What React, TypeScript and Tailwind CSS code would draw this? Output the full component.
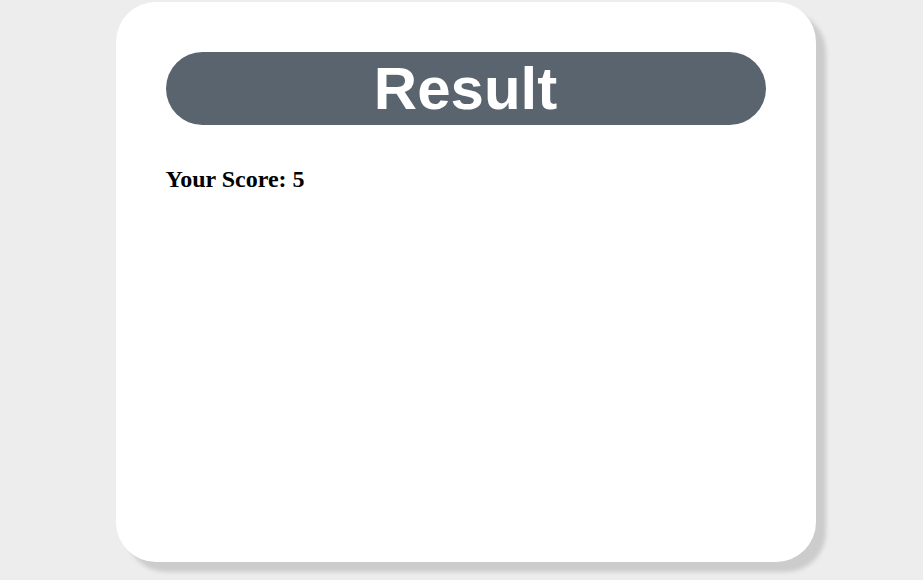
const App = () => {
  return (
    <div className="min-h-[580px] w-full bg-[#ededed] flex justify-center pt-[2px] pl-[8px]">
      <div className="w-[700px] h-[560px] bg-white rounded-[40px] shadow-[10px_10px_4px_#cccccc] px-[50px] pt-[50px]">
        <div className="h-[73px] rounded-full bg-[#5a646f] flex items-center justify-center">
          <h1 className="text-white text-[60px] font-bold leading-none font-['Liberation_Sans',Arial,sans-serif]">
            Result
          </h1>
        </div>
        <p className="mt-[41px] text-[24px] font-bold text-black leading-[1.15] font-['Liberation_Serif','Times_New_Roman',serif]">
          Your Score: 5
        </p>
      </div>
    </div>
  );
};

export default App;
